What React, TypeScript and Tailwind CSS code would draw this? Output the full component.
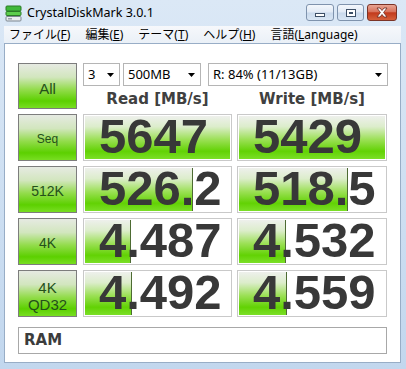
import React from "react"

const BAR =
  "bg-[linear-gradient(to_bottom,#eef0ec_0%,#dcedcb_25%,#9be055_55%,#62d204_82%,#7bdf27_100%)]"
const BTN =
  "bg-[linear-gradient(to_bottom,#e6eae2_0%,#d2e6be_30%,#93dc4c_58%,#5cd000_84%,#78de22_100%)]"

type Row = {
  label: string[]
  size: string
  read: string
  write: string
  rw: number
  ww: number
}

const rows: Row[] = [
  { label: ["Seq"], size: "text-[12px]", read: "5647", write: "5429", rw: 145, ww: 146 },
  { label: ["512K"], size: "text-[14px]", read: "526.2", write: "518.5", rw: 108, ww: 109 },
  { label: ["4K"], size: "text-[14px]", read: "4.487", write: "4.532", rw: 46, ww: 47 },
  { label: ["4K", "QD32"], size: "text-[15px]", read: "4.492", write: "4.559", rw: 47, ww: 48 },
]

function AppIcon() {
  return (
    <svg width="17" height="17" viewBox="0 0 17 17">
      <rect x="1" y="1" width="15" height="5" rx="1" fill="#3fb83a" stroke="#2a7a26" />
      <rect x="1" y="6.5" width="15" height="4" rx="1" fill="#5ccd4c" stroke="#2a7a26" />
      <rect x="1" y="11.5" width="15" height="4.5" rx="1" fill="#e8ecef" stroke="#7d8790" />
      <rect x="3" y="13" width="4" height="1.5" fill="#9aa3ab" />
    </svg>
  )
}

function Arrow() {
  return (
    <svg width="7" height="4" viewBox="0 0 7 4">
      <path d="M0 0 L7 0 L3.5 4 Z" fill="#000" />
    </svg>
  )
}

function Dropdown({ text, w }: { text: string; w: string }) {
  return (
    <div
      className={`${w} h-[23px] flex items-center justify-between border border-[#b5b5b5] bg-white pl-[4px] pr-[5px] text-[13px] text-black font-['Noto_Sans',sans-serif]`}
    >
      <span>{text}</span>
      <Arrow />
    </div>
  )
}

function Cell({ value, bar, w }: { value: string; bar: number; w: string }) {
  const full = bar >= 145
  return (
    <div className={`${w} h-[47px] grid border border-[#c9c9c9] bg-white p-px`}>
      <div
        className={`[grid-area:1/1] h-full ${BAR} ${full ? "" : "border-r border-[#4d6b33]"}`}
        style={{ width: bar }}
      />
      <div className="[grid-area:1/1] self-start pl-[14px] text-[49px] leading-[41px] font-bold text-[#383838] font-['Liberation_Sans',sans-serif]">
        {value}
      </div>
    </div>
  )
}

function Label({ lines, size, h }: { lines: string[]; size: string; h: string }) {
  return (
    <div
      className={`w-[59px] ${h} flex flex-col items-center justify-center pt-[4px] border border-[#7d7d7d] ${BTN}`}
    >
      {lines.map((l) => (
        <span
          key={l}
          className={`${size} leading-[17px] text-[#24501a] font-['Liberation_Sans',sans-serif]`}
        >
          {l}
        </span>
      ))}
    </div>
  )
}

export default function App() {
  return (
    <div className="w-[406px] h-[369px] flex flex-col bg-[linear-gradient(to_bottom,#dbe8f6,#c2d7ee)] pl-[4px] pr-[5px] pb-[6px] overflow-hidden">
      {/* title bar */}
      <div className="h-[26px] flex items-center shrink-0">
        <div className="ml-[1px] mr-[5px] mt-[1px]">
          <AppIcon />
        </div>
        <span className="text-[12.5px] text-black font-['Noto_Sans',sans-serif]">CrystalDiskMark 3.0.1</span>
        <div className="ml-auto mr-[4px] flex items-center gap-[3px] self-start mt-[4px]">
          <div className="w-[28px] h-[17px] rounded-[3px] border border-[#7f93ad] bg-[linear-gradient(to_bottom,#f3f7fc_0%,#e1eaf5_48%,#c9d9ec_52%,#d9e6f4_100%)] flex items-center justify-center">
            <div className="w-[10px] h-[4px] mt-[5px] border border-[#3d4f66] bg-white" />
          </div>
          <div className="w-[27px] h-[17px] rounded-[3px] border border-[#7f93ad] bg-[linear-gradient(to_bottom,#f3f7fc_0%,#e1eaf5_48%,#c9d9ec_52%,#d9e6f4_100%)] flex items-center justify-center">
            <div className="w-[10px] h-[8px] border border-[#3d4f66] bg-white flex items-center justify-center">
              <div className="w-[4px] h-[2px] border border-[#3d4f66]" />
            </div>
          </div>
          <div className="w-[30px] h-[17px] rounded-[3px] border border-[#7b3326] bg-[linear-gradient(to_bottom,#e8a593_0%,#d8735c_45%,#c23a1c_52%,#d5603a_100%)] flex items-center justify-center">
            <svg width="12" height="11" viewBox="0 0 12 11">
              <path
                d="M1 1 H4 L6 3.5 L8 1 H11 L7.6 5.5 L11 10 H8 L6 7.5 L4 10 H1 L4.4 5.5 Z"
                fill="#fff"
                stroke="#6b2a1e"
                strokeWidth="0.8"
              />
            </svg>
          </div>
        </div>
      </div>

      {/* menu bar */}
      <div className="h-[17px] shrink-0 flex items-center gap-[15px] pl-[5px] bg-[linear-gradient(to_bottom,#f6f8fb,#eaf0f7)] text-[12px] text-black font-['Noto_Sans','Noto_Sans_CJK_JP',sans-serif]">
        <span>ファイル(<u>F</u>)</span>
        <span>編集(<u>E</u>)</span>
        <span>テーマ(<u>T</u>)</span>
        <span>ヘルプ(<u>H</u>)</span>
        <span>言語(<u>L</u>anguage)</span>
      </div>

      {/* client */}
      <div className="flex-1 bg-white border border-[#98adc6] pt-[19px] pl-[13px]">
        <div className="flex">
          <Label lines={["All"]} size="text-[15px]" h="h-[46px]" />
          <div className="ml-[6px] flex flex-col">
            <div className="flex">
              <Dropdown text="3" w="w-[37px]" />
              <Dropdown text="500MB" w="w-[78px] ml-[3px]" />
              <Dropdown text="R: 84% (11/13GB)" w="w-[180px] ml-[7px]" />
            </div>
            <div className="flex h-[23px] pt-[3px] text-[15px] leading-[20px] font-bold text-[#404040] font-['DejaVu_Sans',sans-serif]">
              <div className="w-[149px] text-center">Read [MB/s]</div>
              <div className="w-[150px] ml-[5px] text-center">Write [MB/s]</div>
            </div>
          </div>
        </div>

        {rows.map((r) => (
          <div key={r.read} className="flex mt-[5px]">
            <Label lines={r.label} size={r.size} h="h-[47px]" />
            <div className="ml-[6px]">
              <Cell value={r.read} bar={r.rw} w="w-[149px]" />
            </div>
            <div className="ml-[5px]">
              <Cell value={r.write} bar={r.ww} w="w-[150px]" />
            </div>
          </div>
        ))}

        <div className="mt-[10px] w-[369px] h-[27px] flex items-center border border-[#a8a8a8] pl-[5px] text-[15px] font-bold text-[#3c3c3c] font-['DejaVu_Sans',sans-serif]">
          RAM
        </div>
      </div>
    </div>
  )
}
